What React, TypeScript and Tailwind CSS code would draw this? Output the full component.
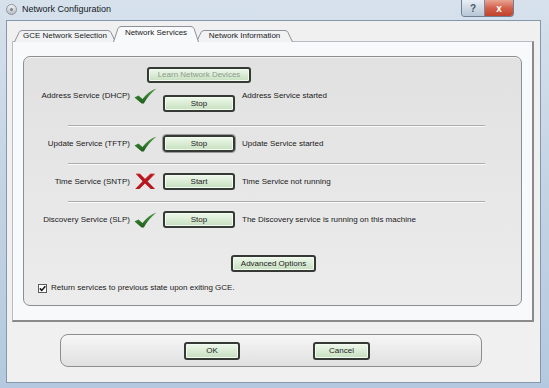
import type { ReactNode } from "react";

const rows = [
  { label: "Update Service (TFTP)", ok: true, action: "Stop", status: "Update Service started", focus: true },
  { label: "Time Service (SNTP)", ok: false, action: "Start", status: "Time Service not running", focus: false },
  { label: "Discovery Service (SLP)", ok: true, action: "Stop", status: "The Discovery service is running on this machine", focus: false },
];

const GreenButton = ({
  children,
  className,
  disabled,
  focus,
}: {
  children: ReactNode;
  className: string;
  disabled?: boolean;
  focus?: boolean;
}) => (
  <div
    className={`flex items-center justify-center rounded-[3px] border-2 border-[#353a35] bg-linear-to-b from-[#eef8eb] to-[#c6dfbf] text-[8px] leading-none shadow-[inset_0_0_0_1px_#f3faf1] ${
      disabled ? "text-[#8d9b8b]" : "text-[#1c1c1c]"
    } ${focus ? "outline outline-1 outline-[#9a9a9a]" : ""} ${className}`}
  >
    {children}
  </div>
);

const Check = () => (
  <svg width="23" height="16" viewBox="0 0 23 16">
    <defs>
      <linearGradient id="chk" x1="0" y1="0" x2="0" y2="1">
        <stop offset="0" stopColor="#4c9a42" />
        <stop offset="1" stopColor="#1f5e1c" />
      </linearGradient>
    </defs>
    <path d="M0.5 9.5 L4.5 7.5 L8.5 11 C12 6.5 16.5 2.5 22.5 0.5 C17.5 4.5 13 9.5 9.8 15.5 L7.6 15.5 Z" fill="url(#chk)" />
  </svg>
);

const Cross = () => (
  <svg width="22" height="17" viewBox="0 0 22 17">
    <path d="M2 1 L6 1 L11 6.2 L16.5 1 L20.5 1 L13.5 8.3 L21 16 L16.8 16 L11 10.4 L5.4 16 L1.2 16 L8.6 8.3 Z" fill="#b5161d" />
    <path d="M2 1 L6 1 L11 6.2 L16.5 1 L20.5 1 L13.5 8.3" fill="none" stroke="#d8343a" strokeWidth="0.8" />
  </svg>
);

const Tab = ({ label, w, selected }: { label: string; w: number; selected?: boolean }) => {
  const h = selected ? 16 : 12;
  return (
    <div
      className={`relative flex items-center justify-center text-[8px] text-[#1a1a1a] ${
        selected ? "z-10 h-[16px] pb-[2px]" : "h-[12px]"
      } ${w === 102 ? "w-[102px]" : w === 86 ? "w-[86px] -mx-[3px]" : "w-[97px]"}`}
    >
      <svg className="absolute inset-0" width={w} height={h} viewBox={`0 0 ${w} ${h}`}>
        <path
          d={`M0.5 ${h} L5 2.5 Q6 0.5 8 0.5 L${w - 8} 0.5 Q${w - 6} 0.5 ${w - 5} 2.5 L${w - 0.5} ${h}`}
          fill={selected ? "#f8f9fb" : "#f1f2f4"}
          stroke="#8d9096"
          strokeWidth="1"
        />
      </svg>
      <span className="relative">{label}</span>
    </div>
  );
};

export default function App() {
  return (
    <div className="flex h-[388px] w-[549px] flex-col overflow-hidden bg-linear-to-b from-[#d6e1ec] via-[#c3d3e4] to-[#b4c9df] pl-[6px] pr-[8px] font-['Liberation_Sans',Arial,sans-serif] text-[#1a1a1a]">
      {/* title bar */}
      <div className="-ml-[6px] -mr-[8px] flex h-[20px] items-start pl-[6px] pr-[35px]">
        <div className="mt-[4px] flex h-[11px] w-[11px] items-center justify-center rounded-full border border-[#8c9299] bg-linear-to-b from-[#f2f2f2] to-[#b9bec4]">
          <div className="h-[3px] w-[3px] rounded-full bg-[#7d848c]" />
        </div>
        <div className="ml-[5px] mt-[3px] text-[9px] leading-[12px] text-[#15191f]">Network Configuration</div>
        <div className="ml-auto flex h-[17px] overflow-hidden rounded-b-[4px] border border-t-0 border-[#6e7f91]">
          <div className="flex w-[23px] items-center justify-center border-r border-[#7c8b9b] bg-linear-to-b from-[#e8eef4] to-[#b7c6d6] text-[10px] font-bold text-[#4c5866]">
            ?
          </div>
          <div className="flex w-[28px] items-center justify-center bg-linear-to-b from-[#e9a493] via-[#d2604a] to-[#c0412b] text-[10px] font-bold text-white">
            x
          </div>
        </div>
      </div>

      {/* client area */}
      <div className="flex h-[363px] flex-col border border-[#8597aa] bg-[#f0f0f0]">
        <div className="ml-[7px] mt-[5px] flex items-end">
          <Tab label="GCE Network Selection" w={102} />
          <Tab label="Network Services" w={86} selected />
          <Tab label="Network Information" w={97} />
        </div>

        <div className="-mt-px ml-[5px] h-[281px] w-[522px] border-l border-t border-[#b8bcc3] border-b-2 border-r-2 border-b-[#8a8a8a] border-r-[#8a8a8a] bg-[#f8f9fb] pl-[10px] pt-[14px]">
          <div className="flex h-[250px] w-[499px] flex-col rounded-[7px] border border-[#8e8e8e] bg-linear-to-b from-[#e1e1e1] to-[#ececec] shadow-[inset_0_1px_0_#f4f4f4]">
            {/* address row */}
            <div className="pt-[10px]">
              <GreenButton className="ml-[123px] h-[16px] w-[104px]" disabled>
                Learn Network Devices
              </GreenButton>
              <div className="mt-[5px] flex h-[24px] items-start">
                <div className="w-[106px] text-right text-[8px] leading-[16px]">Address Service (DHCP)</div>
                <div className="ml-[4px] w-[29px]">
                  <Check />
                </div>
                <GreenButton className="mt-[7px] h-[17px] w-[72px]">Stop</GreenButton>
                <div className="ml-[7px] text-[8px] leading-[16px]">Address Service started</div>
              </div>
            </div>

            <div className="mt-[13px]">
              {rows.map((r) => (
                <div key={r.label}>
                  <div className="ml-[44px] h-[2px] w-[417px] border-t border-b border-t-[#acacac] border-b-[#fafafa]" />
                  <div className="flex h-[36px] items-center pb-[3px]">
                    <div className="w-[106px] text-right text-[8px]">{r.label}</div>
                    <div className="ml-[4px] flex w-[29px]">{r.ok ? <Check /> : <Cross />}</div>
                    <GreenButton className="h-[17px] w-[72px]" focus={r.focus}>
                      {r.action}
                    </GreenButton>
                    <div className="ml-[7px] text-[8px]">{r.status}</div>
                  </div>
                </div>
              ))}
            </div>

            <GreenButton className="ml-[207px] mt-[16px] h-[17px] w-[85px]">Advanced Options</GreenButton>

            <div className="ml-[14px] mt-[10px] flex h-[12px] items-center">
              <div className="flex h-[9px] w-[9px] items-center justify-center border border-[#5a5a5a] bg-white">
                <svg width="7" height="7" viewBox="0 0 7 7">
                  <path d="M0.8 3.4 L2.8 5.4 L6.3 1.2" fill="none" stroke="#1a1a1a" strokeWidth="1.6" />
                </svg>
              </div>
              <div className="ml-[4px] text-[8px]">Return services to previous state upon exiting GCE.</div>
            </div>
          </div>
        </div>

        <div className="ml-[53px] mt-[12px] flex h-[33px] w-[422px] items-center rounded-[8px] border border-[#8e8e8e] bg-linear-to-b from-[#f6f6f6] to-[#e0e0e0]">
          <GreenButton className="ml-[123px] h-[18px] w-[56px]">OK</GreenButton>
          <GreenButton className="ml-[73px] h-[18px] w-[57px]">Cancel</GreenButton>
        </div>
      </div>
    </div>
  );
}
